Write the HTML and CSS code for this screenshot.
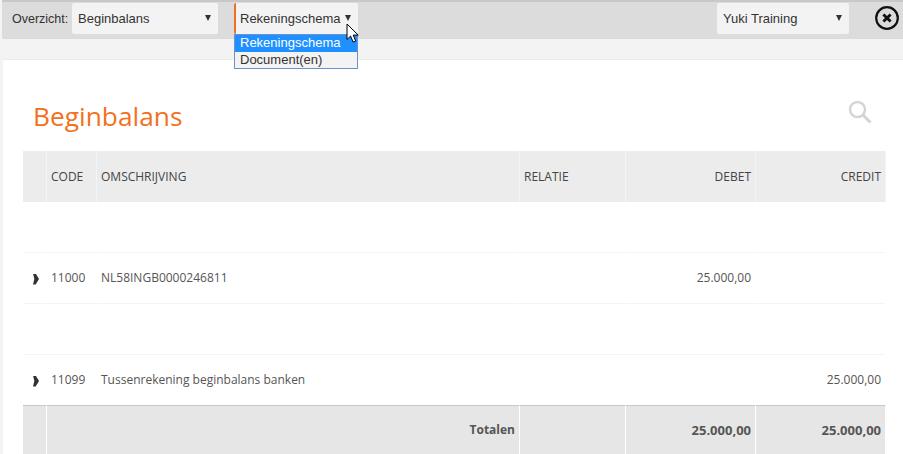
FILE: index.html
```html
<!DOCTYPE html>
<html lang="en">
<head>
    <meta charset="UTF-8">
    <title>Beginbalans</title>
    <link rel="stylesheet" href="styles.css">
</head>
<body>
    <div class="toolbar">
        <span class="toolbar-label">Overzicht:</span>
        <div class="select select-view">Beginbalans<span class="arrow"></span></div>
        <div class="dropdown">
            <div class="select select-schema">Rekeningschema<span class="arrow"></span></div>
            <ul class="dropdown-list">
                <li class="selected">Rekeningschema</li>
                <li>Document(en)</li>
            </ul>
            <svg class="cursor" width="14" height="21" viewBox="0 0 14 21">
                <path d="M1 1v15.5l3.6-3.4 2.5 6 2.6-1.1-2.5-5.9h5z" fill="#fff" stroke="#000" stroke-width="1"/>
            </svg>
        </div>
        <div class="select select-company">Yuki Training<span class="arrow"></span></div>
        <svg class="close" width="26" height="26" viewBox="0 0 26 26">
            <circle cx="13" cy="13" r="10.8" fill="none" stroke="#111" stroke-width="2.2"/>
            <path d="M9.4 9.4l7.2 7.2M16.6 9.4l-7.2 7.2" fill="none" stroke="#111" stroke-width="2.8"/>
        </svg>
    </div>

    <div class="panel">
        <div class="panel-head">
            <h1>Beginbalans</h1>
            <svg class="search" width="24" height="24" viewBox="0 0 24 24">
                <circle cx="9.5" cy="9.5" r="7.5" fill="none" stroke="#d4d4d4" stroke-width="2.4"/>
                <path d="M15 15l7.5 7.5" fill="none" stroke="#d4d4d4" stroke-width="3"/>
            </svg>
        </div>
        <table class="grid">
            <thead>
                <tr>
                    <th class="col-toggle"></th>
                    <th class="col-code">CODE</th>
                    <th class="col-desc">OMSCHRIJVING</th>
                    <th class="col-rel">RELATIE</th>
                    <th class="col-num">DEBET</th>
                    <th class="col-num">CREDIT</th>
                </tr>
            </thead>
            <tbody>
                <tr>
                    <td></td><td></td><td></td><td></td><td></td><td></td>
                </tr>
                <tr>
                    <td><span class="expand"></span></td>
                    <td>11000</td>
                    <td>NL58INGB0000246811</td>
                    <td></td>
                    <td class="num">25.000,00</td>
                    <td></td>
                </tr>
                <tr>
                    <td></td><td></td><td></td><td></td><td></td><td></td>
                </tr>
                <tr>
                    <td><span class="expand"></span></td>
                    <td>11099</td>
                    <td>Tussenrekening beginbalans banken</td>
                    <td></td>
                    <td></td>
                    <td class="num">25.000,00</td>
                </tr>
            </tbody>
            <tfoot>
                <tr>
                    <td></td>
                    <td colspan="2" class="num total-label">Totalen</td>
                    <td></td>
                    <td class="num">25.000,00</td>
                    <td class="num">25.000,00</td>
                </tr>
            </tfoot>
        </table>
    </div>
</body>
</html>
```

FILE: styles.css
```css
html, body {
    margin: 0;
    padding: 0;
    height: 454px;
    overflow: hidden;
}
body {
    background: #f3f3f3;
    font-family: "Open Sans", sans-serif;
    color: #555;
}

.toolbar {
    display: flex;
    align-items: flex-start;
    height: 36px;
    margin-left: 2px;
    padding-top: 3px;
    background: #dcdcdc;
    box-shadow: inset 0 2px 0 #c8c8c8;
    border-bottom-left-radius: 2px;
    font-family: "Liberation Sans", Arial, sans-serif;
    font-size: 13px;
    color: #333;
}
.toolbar-label {
    margin: 9px 0 0 10px;
    width: 60px;
    font-size: 12.5px;
}
.select {
    position: relative;
    box-sizing: border-box;
    height: 31px;
    line-height: 32px;
    padding-left: 6px;
    background: #f3f3f3;
    border-radius: 2px;
}
.arrow {
    position: absolute;
    top: 12px;
    right: 7px;
    border-left: 3px solid transparent;
    border-right: 3px solid transparent;
    border-top: 6px solid #333;
}
.select-view {
    width: 146px;
}
.dropdown {
    position: relative;
    margin-left: 16px;
    width: 124px;
}
.select-schema {
    border-left: 2px solid #f37021;
    padding-left: 4px;
}
.dropdown-list {
    position: absolute;
    top: 31px;
    left: 0;
    width: 122px;
    margin: 0;
    padding: 0;
    list-style: none;
    background: #f3f3f3;
    border: 1px solid #6f8fd0;
    line-height: 16px;
}
.dropdown-list li {
    padding-left: 5px;
    height: 16.5px;
}
.dropdown-list .selected {
    background: #1e90ff;
    color: #fff;
}
.cursor {
    position: absolute;
    top: 20px;
    left: 112px;
}
.select-company {
    width: 132px;
    margin-left: 359px;
}
.close {
    margin: 2px 0 0 25px;
}

.panel {
    margin: 20px 0 0 3px;
    height: 394px;
    padding: 0 17px 0 20px;
    background: #fff;
    border-top: 1px solid #ececec;
}
.panel-head {
    display: flex;
    justify-content: space-between;
    height: 91px;
}
h1 {
    margin: 38px 0 0 10px;
    font-size: 26.3px;
    font-weight: 400;
    line-height: 36px;
    color: #f37021;
}
.search {
    margin: 40px 14px 0 0;
}

.grid {
    width: 863px;
    border-collapse: separate;
    border-spacing: 0;
    table-layout: fixed;
    font-size: 12px;
}
.grid th, .grid td {
    box-sizing: border-box;
    height: 51px;
    padding: 0 4px;
    font-weight: 400;
    text-align: left;
    color: #555;
    border-right: 1px solid #fff;
}
.grid th {
    background: #ececec;
    border-right-color: #f0f4ff;
    color: #444;
}
.grid tbody td {
    padding-bottom: 2px;
    border-bottom: 1px solid #f0f5fb;
}
.grid tbody tr:last-child td {
    height: 50px;
    border-bottom: 0;
}
.grid tfoot td {
    height: 49px;
    padding-bottom: 1px;
    background: #e6e6e6;
    border-top: 1px solid #c8c8c8;
    font-weight: 700;
    color: #555;
    font-size: 13px;
}
.grid tfoot .total-label {
    font-size: 12px;
}
.col-toggle { width: 24px; }
.col-code { width: 50px; }
.col-desc { width: 423px; }
.col-rel { width: 106px; }
.col-num { width: 130px; }
.grid .col-num, .grid .num {
    text-align: right;
}
.expand {
    display: inline-block;
    margin: 8px 0 0 6px;
    width: 6px;
    height: 11px;
    background: #333;
    clip-path: polygon(0 0, 45% 0, 100% 50%, 45% 100%, 0 100%, 22% 50%);
}
```
